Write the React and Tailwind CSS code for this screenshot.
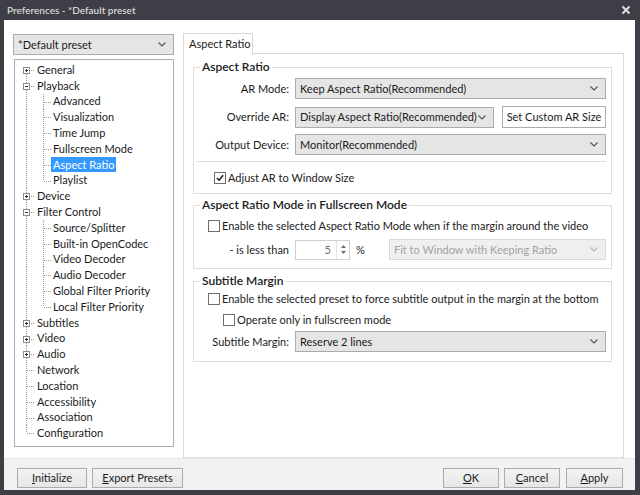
import React from "react";

const FONT = "font-['Lato','Liberation_Sans',sans-serif]";

const TREE = [
  { label: "General", level: 0, box: "+", first: true },
  { label: "Playback", level: 0, box: "-" },
  { label: "Advanced", level: 1 },
  { label: "Visualization", level: 1 },
  { label: "Time Jump", level: 1 },
  { label: "Fullscreen Mode", level: 1 },
  { label: "Aspect Ratio", level: 1, selected: true },
  { label: "Playlist", level: 1, last: true },
  { label: "Device", level: 0, box: "+" },
  { label: "Filter Control", level: 0, box: "-" },
  { label: "Source/Splitter", level: 1 },
  { label: "Built-in OpenCodec", level: 1 },
  { label: "Video Decoder", level: 1 },
  { label: "Audio Decoder", level: 1 },
  { label: "Global Filter Priority", level: 1 },
  { label: "Local Filter Priority", level: 1, last: true },
  { label: "Subtitles", level: 0, box: "+" },
  { label: "Video", level: 0, box: "+" },
  { label: "Audio", level: 0, box: "+" },
  { label: "Network", level: 0 },
  { label: "Location", level: 0 },
  { label: "Accessibility", level: 0 },
  { label: "Association", level: 0 },
  { label: "Configuration", level: 0, last: true },
];

const DOT = { stroke: "#9a9a9a", strokeDasharray: "1 1", strokeWidth: 1 };

function Gutter({ item }) {
  if (item.level === 1) {
    return (
      <svg width="38" height="100%" className="shrink-0">
        <line x1="11.5" y1="0" x2="11.5" y2="16" {...DOT} />
        <line x1="28.5" y1="0" x2="28.5" y2={item.last ? 8 : 16} {...DOT} />
        <line x1="29" y1="8.5" x2="36" y2="8.5" {...DOT} />
      </svg>
    );
  }
  return (
    <svg width="22" height="100%" className="shrink-0">
      <line
        x1="11.5"
        y1={item.first ? 8 : 0}
        x2="11.5"
        y2={item.last ? 8 : 16}
        {...DOT}
      />
      <line x1="12" y1="8.5" x2="20" y2="8.5" {...DOT} />
      {item.box && (
        <g>
          <rect x="8.5" y="5.5" width="6" height="6" fill="#fff" stroke="#8c8c8c" />
          <line x1="10" y1="8.5" x2="13" y2="8.5" stroke="#333" />
          {item.box === "+" && (
            <line x1="11.5" y1="7" x2="11.5" y2="10" stroke="#333" />
          )}
        </g>
      )}
    </svg>
  );
}

function Chevron({ color = "#555" }) {
  return (
    <svg width="8" height="5" viewBox="0 0 8 5" className="shrink-0">
      <path d="M0.5 0.5 L4 4 L7.5 0.5" fill="none" stroke={color} strokeWidth="1.2" />
    </svg>
  );
}

function Combo({ value, className = "", disabled = false }) {
  return (
    <div
      className={`h-[21px] flex items-center justify-between pl-[4px] pr-[7px] border whitespace-nowrap ${
        disabled
          ? "border-[#d9d9d9] bg-[#efefef] text-[#a3a3a3]"
          : "border-[#acacac] bg-[#e5e5e5] text-[#1b1b1b]"
      } ${className}`}
    >
      <span className="truncate">{value}</span>
      <Chevron color={disabled ? "#b5b5b5" : "#555"} />
    </div>
  );
}

function Check({ checked }) {
  return (
    <div className="w-[12px] h-[12px] border border-[#6e6e6e] bg-white flex items-center justify-center shrink-0">
      {checked && (
        <svg width="8" height="8" viewBox="0 0 9 9">
          <path d="M1 4.5 L3.5 7 L8 1.5" fill="none" stroke="#1a1a1a" strokeWidth="1.7" />
        </svg>
      )}
    </div>
  );
}

function Button({ children, className = "" }) {
  return (
    <div
      className={`h-[20px] flex items-center justify-center border border-[#acacac] whitespace-nowrap text-[#1b1b1b] ${className}`}
    >
      {children}
    </div>
  );
}

function Group({ title, className = "", children }) {
  return (
    <fieldset className={`border border-[#dcdcdc] ${className}`}>
      <legend className="ml-[6px] px-[2px] leading-[14px] text-[12px] font-semibold text-[#1b1b1b]">
        {title}
      </legend>
      {children}
    </fieldset>
  );
}

function Label({ children }) {
  return <div className="w-[96px] text-right pr-[1px] shrink-0 whitespace-nowrap">{children}</div>;
}

const FOOT_BTN = "bg-gradient-to-b from-[#f3f3f3] to-[#e6e6e6]";

export default function App() {
  return (
    <div
      className={`w-[640px] h-[495px] bg-[#3e3e46] flex flex-col text-[11px] leading-[14px] text-[#1b1b1b] ${FONT}`}
    >
      {/* title bar */}
      <div className="h-[20px] flex items-center justify-between pl-[7px] pr-[9px] shrink-0">
        <span className="text-[10px] font-semibold text-[#d6d6d6]">Preferences - *Default preset</span>
        <svg width="10" height="10" viewBox="0 0 10 10">
          <path d="M1.5 1.5 L8.5 8.5 M8.5 1.5 L1.5 8.5" stroke="#e0e0e0" strokeWidth="2" />
        </svg>
      </div>

      <div className="flex-1 ml-[4px] mr-[5px] mb-[5px] bg-white flex flex-col">
        <div className="h-[438px] flex pt-[13px] pl-[9px] pr-[11px]">
          {/* left column */}
          <div className="w-[161px] shrink-0 pt-px flex flex-col">
            <Combo value="*Default preset" />
            <div className="mt-[4px] ml-px h-[388px] border border-[#abadb3] bg-white pt-[2px]">
              {TREE.map((item) => (
                <div key={item.label} className="h-[15.8px] flex items-stretch whitespace-nowrap">
                  <Gutter item={item} />
                  <div className="flex items-center">
                    <span
                      className={
                        item.selected
                          ? "bg-[#3399ff] text-white px-[2px] -ml-[2px] leading-[15px]"
                          : ""
                      }
                    >
                      {item.label}
                    </span>
                  </div>
                </div>
              ))}
            </div>
          </div>

          {/* right column */}
          <div className="ml-[9px] flex-1 flex flex-col">
            <div className="flex">
              <div className="w-[70px] h-[21px] border border-b-0 border-[#d9d9d9] bg-white flex items-center pl-[5px] whitespace-nowrap relative z-10 -mb-px">
                Aspect Ratio
              </div>
            </div>
            <div className="flex-1 border border-[#d9d9d9] pt-[6px] pl-[9px] pr-[11px] flex flex-col">
              <Group title="Aspect Ratio" className="pr-[5px] pb-[8px]">
                <div className="mt-[4px] flex items-center gap-[5px]">
                  <Label>AR Mode:</Label>
                  <Combo value="Keep Aspect Ratio(Recommended)" className="flex-1" />
                </div>
                <div className="mt-[7px] flex items-center">
                  <Label>Override AR:</Label>
                  <Combo value="Display Aspect Ratio(Recommended)" className="ml-[5px] w-[199px]" />
                  <Button className="ml-[8px] flex-1 h-[22px] bg-white border-[#adadad]">
                    Set Custom AR Size
                  </Button>
                </div>
                <div className="mt-[6px] flex items-center gap-[5px]">
                  <Label>Output Device:</Label>
                  <Combo value="Monitor(Recommended)" className="flex-1" />
                </div>
                <div className="mt-[6px] ml-[3px] h-px bg-[#dcdcdc]" />
                <div className="mt-[9px] h-[14px] pl-[20px] flex items-center gap-[2px] whitespace-nowrap">
                  <Check checked />
                  <span>Adjust AR to Window Size</span>
                </div>
              </Group>

              <Group title="Aspect Ratio Mode in Fullscreen Mode" className="mt-[4px] pr-[5px] pb-[8px]">
                <div className="mt-[7px] h-[14px] pl-[14px] flex items-center gap-[2px] whitespace-nowrap">
                  <Check />
                  <span>Enable the selected Aspect Ratio Mode when if the margin around the video</span>
                </div>
                <div className="mt-[6px] flex items-center">
                  <Label>- is less than</Label>
                  <div className="ml-[5px] w-[55px] h-[20px] border border-[#d0d0d0] bg-white flex">
                    <div className="flex-1 flex items-center justify-end pr-[5px] text-[#6d6d6d]">5</div>
                    <div className="w-[13px] flex flex-col items-center justify-center gap-[3px] border-l border-[#e5e5e5]">
                      <svg width="5" height="3" viewBox="0 0 5 3">
                        <path d="M0 3 L2.5 0 L5 3 Z" fill="#6d6d6d" />
                      </svg>
                      <svg width="5" height="3" viewBox="0 0 5 3">
                        <path d="M0 0 L2.5 3 L5 0 Z" fill="#6d6d6d" />
                      </svg>
                    </div>
                  </div>
                  <span className="ml-[6px]">%</span>
                  <Combo
                    value="Fit to Window with Keeping Ratio"
                    disabled
                    className="ml-auto w-[217px] h-[20px]"
                  />
                </div>
              </Group>

              <Group title="Subtitle Margin" className="mt-[5px] pr-[5px] pb-[9px]">
                <div className="mt-[4px] h-[14px] pl-[14px] flex items-center gap-[2px] whitespace-nowrap">
                  <Check />
                  <span>Enable the selected preset to force subtitle output in the margin at the bottom</span>
                </div>
                <div className="mt-[7px] h-[14px] pl-[29px] flex items-center gap-[2px] whitespace-nowrap">
                  <Check />
                  <span>Operate only in fullscreen mode</span>
                </div>
                <div className="mt-[4px] flex items-center gap-[5px]">
                  <Label>Subtitle Margin:</Label>
                  <Combo value="Reserve 2 lines" className="flex-1" />
                </div>
              </Group>
            </div>
          </div>
        </div>

        {/* footer */}
        <div className="flex-1 bg-[#f2f2f2] border-t border-[#e6e6e6] flex items-start pt-[9px] pl-[13px] pr-[12px]">
          <Button className={`w-[70px] ${FOOT_BTN}`}>
            <span><u>I</u>nitialize</span>
          </Button>
          <Button className={`ml-[5px] w-[91px] ${FOOT_BTN}`}>
            <span><u>E</u>xport Presets</span>
          </Button>
          <div className="ml-auto flex gap-[5px]">
            <Button className={`w-[56px] ${FOOT_BTN}`}>
              <span><u>O</u>K</span>
            </Button>
            <Button className={`w-[56px] ${FOOT_BTN}`}>
              <span><u>C</u>ancel</span>
            </Button>
            <Button className={`w-[57px] ml-px ${FOOT_BTN}`}>
              <span><u>A</u>pply</span>
            </Button>
          </div>
        </div>
      </div>
    </div>
  );
}
